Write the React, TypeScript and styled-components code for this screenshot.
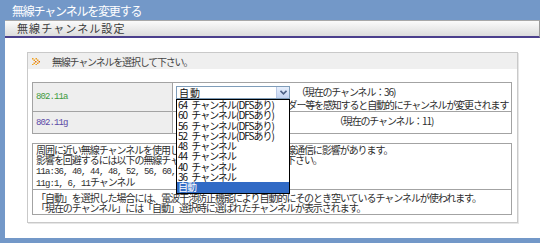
import React from "react";
import styled, { createGlobalStyle } from "styled-components";

const GlobalStyle = createGlobalStyle`
  html, body { margin: 0; padding: 0; }
  body {
    background: #7398c8;
    font-family: "Noto Sans CJK JP", "Noto Sans", sans-serif;
  }
`;

const Page = styled.div`
  width: 540px;
  height: 243px;
  background: #7398c8;
  overflow: hidden;
  display: flex;
  flex-direction: column;
`;

const Title = styled.div`
  height: 20px;
  line-height: 21px;
  padding-left: 12px;
  color: #ffffff;
  font-size: 12px;
  letter-spacing: -1.2px;
`;

const Panel = styled.div`
  margin-left: 5px;
  width: 535px;
  height: 218px;
  background: #ffffff;
  display: flex;
  flex-direction: column;
`;

const SectionBar = styled.div`
  height: 15px;
  line-height: 15px;
  padding-left: 12px;
  background: linear-gradient(#fbfbfb, #dcdcdc);
  border-top: 1px solid #a8a8a8;
  border-right: 1px solid #9a9a9a;
  border-bottom: 2px solid #4b3f8c;
  color: #3a3a3a;
  font-size: 11px;
  letter-spacing: 1.1px;
`;

const Content = styled.div`
  padding: 14px 0 0 22px;
`;

const Box = styled.div`
  width: 489px;
  height: 169px;
  border: 1px solid #c9c9c9;
  box-shadow: 1px 1px 0 #e6e6e6;
`;

const BoxHeader = styled.div`
  height: 16px;
  display: flex;
  align-items: center;
  gap: 12px;
  padding-left: 4px;
  background: #efefef;
  color: #444;
  font-size: 10px;
  letter-spacing: -1.2px;
`;

const Table = styled.table<{ $mt: number }>`
  margin: ${(p) => p.$mt}px 0 0 4px;
  width: 480px;
  border-collapse: collapse;
  table-layout: fixed;
`;

const LabelCell = styled.td<{ $color: string }>`
  width: 136px;
  padding: 0 0 0 3px;
  border: 1px solid #a3a3a3;
  background: #eeeeee;
  color: ${(p) => p.$color};
  font-family: "Liberation Mono", monospace;
  font-size: 9px;
  letter-spacing: -0.9px;
  vertical-align: middle;
`;

const ValueCell = styled.td<{ $h: number }>`
  height: ${(p) => p.$h}px;
  padding: 3px 3px 0;
  border: 1px solid #a3a3a3;
  color: #2e2e2e;
  font-size: 10px;
  letter-spacing: -1.16px;
  line-height: 12px;
  vertical-align: top;
  box-sizing: border-box;
  white-space: nowrap;
`;

const NoteCell = styled.td<{ $h: number; $pt: number }>`
  height: ${(p) => p.$h}px;
  padding: ${(p) => p.$pt}px 3px 0;
  border: 1px solid #a3a3a3;
  color: #2e2e2e;
  font-size: 10px;
  letter-spacing: -1.05px;
  line-height: 10px;
  vertical-align: top;
  box-sizing: border-box;
  white-space: nowrap;
`;

const Mono = styled.span`
  font-family: "Liberation Mono", monospace;
  font-size: 9px;
  letter-spacing: -0.9px;
`;

const SelectWrap = styled.span`
  position: relative;
  display: inline-block;
  vertical-align: top;
  margin-right: 6px;
`;

const SelectBox = styled.span<{ $w: number }>`
  display: flex;
  align-items: center;
  justify-content: space-between;
  width: ${(p) => p.$w}px;
  height: 13px;
  box-sizing: border-box;
  border: 1px solid #7f9db9;
  background: #fff;
  padding-left: 2px;
  color: #111;
  font-size: 10px;
  letter-spacing: 1px;
`;

const ArrowBtn = styled.span`
  width: 12px;
  height: 11px;
  display: flex;
  align-items: center;
  justify-content: center;
  background: linear-gradient(#e8f0fd, #c3d3f0);
  border-left: 1px solid #b9c9e6;
`;

const DropList = styled.div`
  position: absolute;
  top: 13px;
  left: 0;
  width: 114px;
  box-sizing: border-box;
  border: 1px solid #000;
  background: #fff;
  overflow: hidden;
  z-index: 5;
`;

const DropItem = styled.div<{ $sel?: boolean }>`
  height: 10.3px;
  line-height: 10.3px;
  padding-left: 1px;
  font-size: 10px;
  letter-spacing: -1px;
  word-spacing: 3px;
  white-space: pre;
  color: ${(p) => (p.$sel ? "#fff" : "#111")};
  background: ${(p) => (p.$sel ? "#316ac5" : "transparent")};
`;

const InfoGap = styled.span`
  display: inline-block;
  width: 38px;
`;

const Arrows = () => (
  <svg width="8" height="7" viewBox="0 0 8 7">
    <g fill="#f0a020">
      <rect x="0" y="0" width="1.5" height="1.5" />
      <rect x="1.5" y="1.5" width="1.5" height="1.5" />
      <rect x="3" y="3" width="1.5" height="1.5" fill="#e07010" />
      <rect x="1.5" y="4.5" width="1.5" height="1.5" />
      <rect x="0" y="6" width="1.5" height="1" />
      <rect x="3.5" y="0" width="1.5" height="1.5" />
      <rect x="5" y="1.5" width="1.5" height="1.5" />
      <rect x="6.5" y="3" width="1.5" height="1.5" fill="#e07010" />
      <rect x="5" y="4.5" width="1.5" height="1.5" />
      <rect x="3.5" y="6" width="1.5" height="1" />
    </g>
  </svg>
);

const Chevron = () => (
  <svg width="7" height="5" viewBox="0 0 7 5">
    <path d="M0.5 0.8 L3.5 3.8 L6.5 0.8" stroke="#4d6185" strokeWidth="1.6" fill="none" />
  </svg>
);

const options = [
  "64 チャンネル(DFSあり)",
  "60 チャンネル(DFSあり)",
  "56 チャンネル(DFSあり)",
  "52 チャンネル(DFSあり)",
  "48 チャンネル",
  "44 チャンネル",
  "40 チャンネル",
  "36 チャンネル",
  "自動",
];

export default function App() {
  return (
    <>
      <GlobalStyle />
      <Page>
        <Title>無線チャンネルを変更する</Title>
        <Panel>
          <SectionBar>無線チャンネル設定</SectionBar>
          <Content>
            <Box>
              <BoxHeader>
                <Arrows />
                <span>無線チャンネルを選択して下さい。</span>
              </BoxHeader>
              <Table $mt={13}>
                <tbody>
                  <tr>
                    <LabelCell $color="#3f9b3f">802.11a</LabelCell>
                    <ValueCell $h={29}>
                      <SelectWrap>
                        <SelectBox $w={114}>
                          <span>自動</span>
                          <ArrowBtn>
                            <Chevron />
                          </ArrowBtn>
                        </SelectBox>
                        <DropList>
                          {options.map((o) => (
                            <DropItem key={o} $sel={o === "自動"}>
                              {o}
                            </DropItem>
                          ))}
                        </DropList>
                      </SelectWrap>
                      （現在のチャンネル：36)
                      <br />
                      DFSありのチャンネルはレーダー等を感知すると自動的にチャンネルが変更されます
                    </ValueCell>
                  </tr>
                  <tr>
                    <LabelCell $color="#5b4aa6">802.11g</LabelCell>
                    <ValueCell $h={22}>
                      <SelectWrap>
                        <SelectBox $w={114}>
                          <span>自動</span>
                          <ArrowBtn>
                            <Chevron />
                          </ArrowBtn>
                        </SelectBox>
                      </SelectWrap>
                      <InfoGap />
                      （現在のチャンネル：11)
                    </ValueCell>
                  </tr>
                </tbody>
              </Table>
              <Table $mt={9}>
                <tbody>
                  <tr>
                    <NoteCell $h={45} $pt={1}>
                      周囲に近い無線チャンネルを使用している機器がある場合、無線通信に影響があります。
                      <br />
                      影響を回避するには以下の無線チャンネルのどれかを設定して下さい。
                      <br />
                      <Mono>11a:36, 40, 44, 48, 52, 56, 60, 64</Mono>チャンネル
                      <br />
                      <Mono>11g:1, 6, 11</Mono>チャンネル
                    </NoteCell>
                  </tr>
                  <tr>
                    <NoteCell $h={25} $pt={3}>
                      「自動」を選択した場合には、電波干渉防止機能により自動的にそのとき空いているチャンネルが使われます。
                      <br />
                      「現在のチャンネル」には「自動」選択時に選ばれたチャンネルが表示されます。
                    </NoteCell>
                  </tr>
                </tbody>
              </Table>
            </Box>
          </Content>
        </Panel>
      </Page>
    </>
  );
}
